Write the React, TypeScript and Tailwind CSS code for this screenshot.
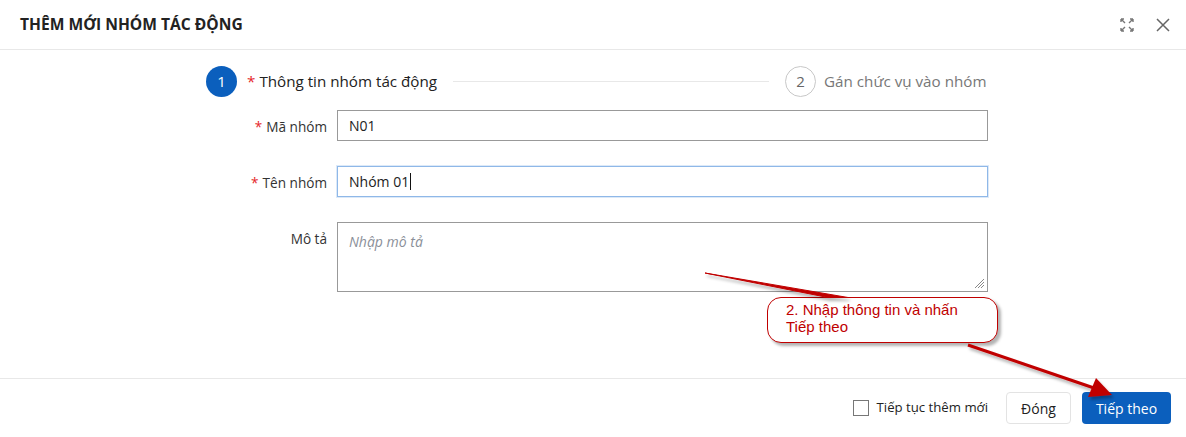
import { useState } from "react";

const ui = { fontFamily: '"Open Sans", "Noto Sans", sans-serif' };

function ExpandIcon() {
  return (
    <svg width="14" height="14" viewBox="0 0 14 14" fill="none" stroke="#777" strokeWidth="1.4">
      <path d="M1 1 L5 5 M1 1 L1 4 M1 1 L4 1" />
      <path d="M13 1 L9 5 M13 1 L13 4 M13 1 L10 1" />
      <path d="M1 13 L5 9 M1 13 L1 10 M1 13 L4 13" />
      <path d="M13 13 L9 9 M13 13 L13 10 M13 13 L10 13" />
    </svg>
  );
}

function CloseIcon() {
  return (
    <svg width="14" height="14" viewBox="0 0 14 14" fill="none" stroke="#666" strokeWidth="1.5">
      <path d="M1 1 L13 13 M13 1 L1 13" />
    </svg>
  );
}

function Field({ label, required, children }: { label: string; required?: boolean; children: React.ReactNode }) {
  return (
    <div className="flex items-start">
      <label className="w-[337px] shrink-0 pr-[10px] pt-[7px] text-right text-[13.6px] text-[#333]">
        {required && <span className="mr-[4px] text-[#e5262a]">*</span>}
        {label}
      </label>
      {children}
    </div>
  );
}

export default function App() {
  const [keep, setKeep] = useState(false);

  return (
    <div className="relative h-[437px] w-[1186px] overflow-hidden bg-white" style={ui}>
      {/* Header */}
      <div className="flex h-[50px] items-center justify-between border-b border-[#e8e8e8] pl-[20px] pr-[10px]">
        <h2 className="text-[15.6px] font-bold text-[#222]">THÊM MỚI NHÓM TÁC ĐỘNG</h2>
        <div className="flex items-center gap-[22px] pr-[6px]">
          <ExpandIcon />
          <CloseIcon />
        </div>
      </div>

      {/* Body */}
      <div className="h-[328px]">
        {/* Steps */}
        <div className="flex items-center pl-[206px] pt-[16px]">
          <span className="flex h-[31px] w-[31px] items-center justify-center rounded-full bg-[#0b5fbd] text-[15px] text-white">1</span>
          <span className="ml-[10px] text-[15.2px] text-[#222]">
            <span className="mr-[4px] text-[#e5262a]">*</span>Thông tin nhóm tác động
          </span>
          <div className="mx-[16px] h-px w-[316px] bg-[#e8e8e8]" />
          <span className="flex h-[31px] w-[31px] items-center justify-center rounded-full border border-[#c8c8c8] text-[15px] text-[#666]">2</span>
          <span className="ml-[8px] text-[15.2px] text-[#777]">Gán chức vụ vào nhóm</span>
        </div>

        {/* Form */}
        <div className="mt-[13px] flex flex-col gap-[25px]">
          <Field label="Mã nhóm" required>
            <div className="flex h-[31px] w-[651px] items-center border border-[#999] px-[11px] text-[14px] text-[#222]">N01</div>
          </Field>
          <Field label="Tên nhóm" required>
            <div className="flex h-[31px] w-[651px] items-center border border-[#8fb8e8] px-[11px] text-[14px] text-[#222] shadow-[0_0_0_1px_#dce9f8]">
              Nhóm 01<span className="ml-px inline-block h-[17px] w-px bg-[#111]" />
            </div>
          </Field>
          <Field label="Mô tả">
            <div className="relative h-[70px] w-[651px] border border-[#999] px-[11px] pt-[8px] text-[14px] italic text-[#8a8f99]">
              Nhập mô tả
              <svg className="absolute bottom-[2px] right-[2px]" width="12" height="12" viewBox="0 0 12 12" stroke="#888" strokeWidth="1">
                <path d="M11 2 L2 11 M11 5 L5 11 M11 8 L8 11" />
              </svg>
            </div>
          </Field>
        </div>
      </div>

      {/* Footer */}
      <div className="flex h-[59px] items-center justify-end border-t border-[#e8e8e8] pr-[15px]">
        <label className="mr-[18px] flex items-center gap-[8px] text-[13.2px] text-[#222]">
          <span
            onClick={() => setKeep(!keep)}
            className="h-[16px] w-[16px] border border-[#777] bg-white"
          />
          Tiếp tục thêm mới
        </label>
        <button className="mr-[11px] h-[32px] w-[65px] rounded-[4px] border border-[#e3e3e3] bg-white text-[14px] text-[#222]">Đóng</button>
        <button className="h-[32px] w-[89px] rounded-[4px] bg-[#0b5fbd] text-[14px] text-white">Tiếp theo</button>
      </div>

      {/* Annotation callout */}
      <div
        className="absolute left-[767px] top-[297px] h-[46px] w-[231px] rounded-[14px] border-[1.5px] border-[#c00000] bg-white px-[18px] pt-[3px] text-[15px] leading-[17px] text-[#c00000] shadow-[3px_3px_3px_rgba(0,0,0,0.3)]"
        style={{ fontFamily: '"Liberation Sans", Arial, sans-serif' }}
      >
        2. Nhập thông tin và nhấn
        <br />
        Tiếp theo
      </div>
      <svg className="pointer-events-none absolute left-0 top-0" width="1186" height="437">
        <defs>
          <filter id="sh" x="-10%" y="-50%" width="120%" height="200%">
            <feDropShadow dx="2" dy="3" stdDeviation="1.5" floodColor="#000" floodOpacity="0.3" />
          </filter>
        </defs>
        {/* callout tail */}
        <path d="M705 273 L828 297.5 L848 297.5 Z" fill="#c00000" stroke="#c00000" strokeWidth="1" strokeLinejoin="round" filter="url(#sh)" />
        {/* arrow */}
        <g filter="url(#sh)">
          <line x1="968" y1="345" x2="1094" y2="388" stroke="#c00000" strokeWidth="3" />
          <path d="M1112 395 L1088 397 L1096 378 Z" fill="#c00000" />
        </g>
      </svg>
    </div>
  );
}
